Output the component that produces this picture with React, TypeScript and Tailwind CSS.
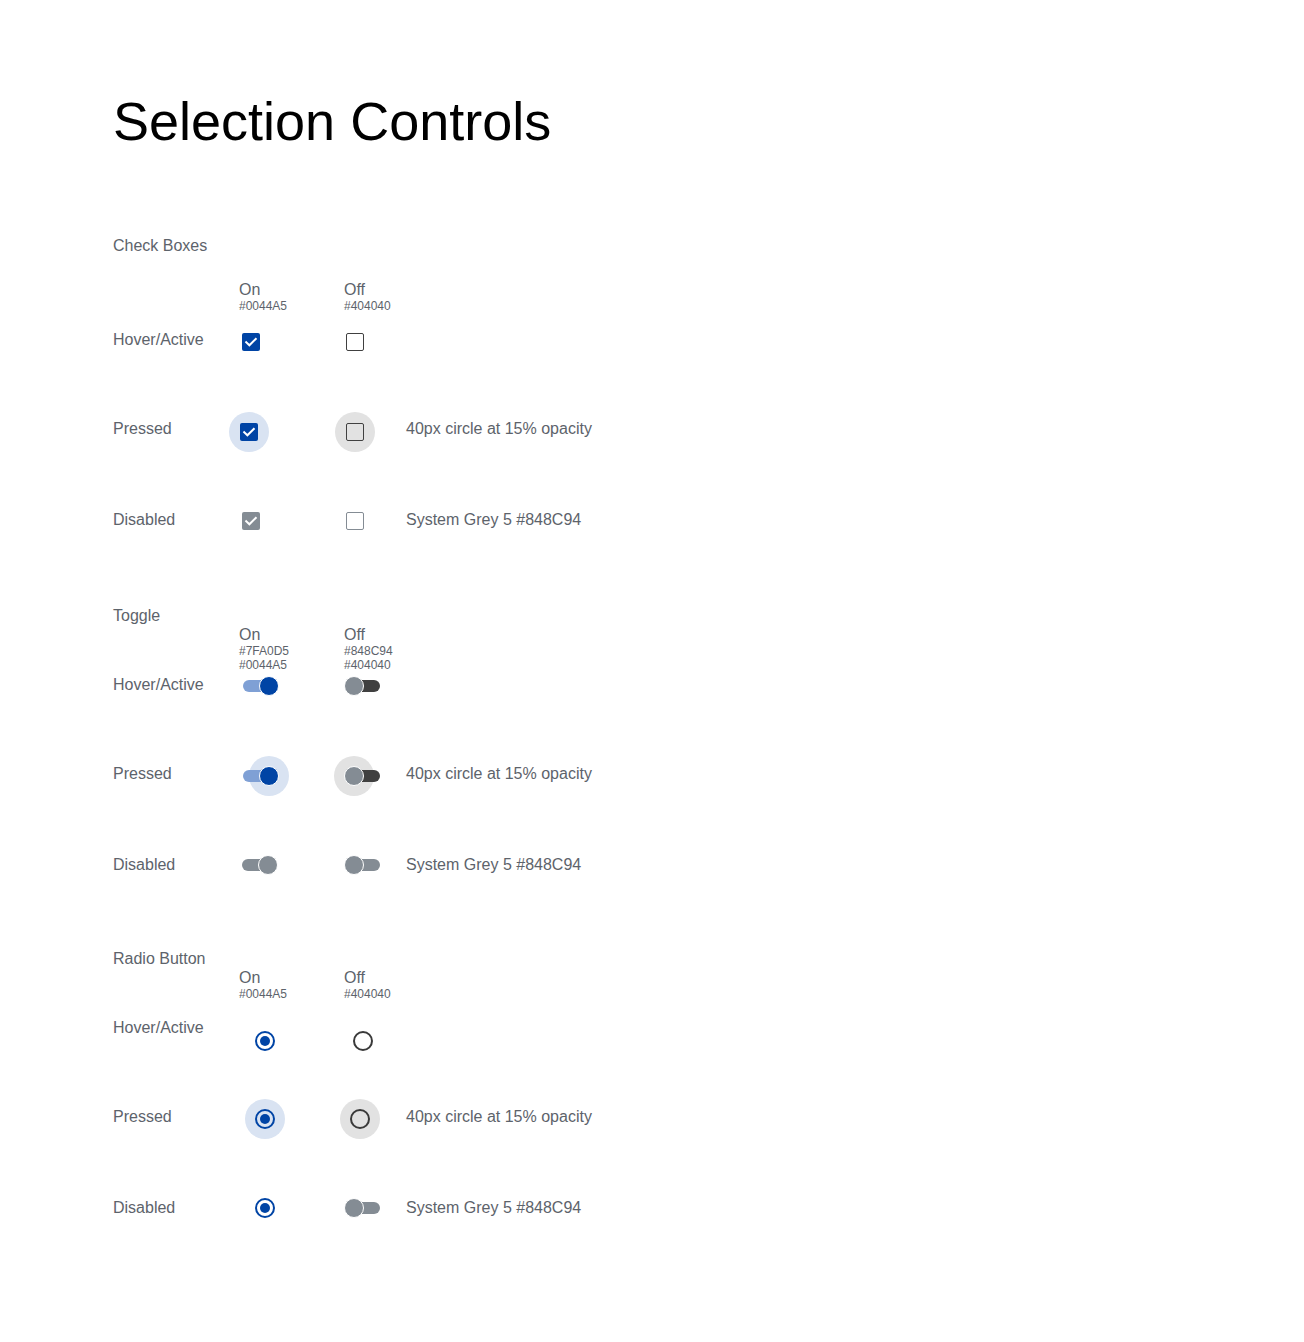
import React from "react";

const grid = "grid grid-cols-[118px_104px_71px_1fr] items-start";
const label = "pt-px text-base leading-6 text-[#5d636b]";

function Check({ color = "bg-[#0044A5]" }: { color?: string }) {
  return (
    <div className={`w-[18px] h-[18px] rounded-[2px] ${color} flex items-center justify-center`}>
      <svg width="18" height="18" viewBox="0 0 18 18" fill="none">
        <path d="M4.2 9.2 L7.4 12.3 L13.8 5.9" stroke="white" strokeWidth="2" strokeLinecap="square" />
      </svg>
    </div>
  );
}

function Box({ border = "border-[#404040]" }: { border?: string }) {
  return <div className={`w-[18px] h-[18px] rounded-[2px] border-[1.5px] ${border} bg-transparent`} />;
}

function Halo({ bg, children }: { bg: string; children: React.ReactNode }) {
  return <div className={`w-10 h-10 rounded-full ${bg} flex items-center justify-center`}>{children}</div>;
}

function Radio({ on }: { on?: boolean }) {
  return on ? (
    <div className="w-5 h-5 rounded-full border-2 border-[#0044A5] flex items-center justify-center">
      <div className="w-2.5 h-2.5 rounded-full bg-[#0044A5]" />
    </div>
  ) : (
    <div className="w-5 h-5 rounded-full border-2 border-[#3a3a3a]" />
  );
}

function Toggle({
  on,
  track,
  knob,
  halo,
}: {
  on?: boolean;
  track: string;
  knob: string;
  halo?: string;
}) {
  return (
    <div className="relative w-[37px] h-5">
      {halo && (
        <span
          className={`absolute top-1/2 -translate-y-1/2 w-10 h-10 rounded-full ${halo} ${on ? "right-[-10px]" : "left-[-10px]"}`}
        />
      )}
      <span className={`absolute left-px right-px top-1 h-3 rounded-full ${track}`} />
      <span className={`absolute top-0 w-5 h-5 rounded-full border border-white ${knob} ${on ? "right-0" : "left-0"}`} />
    </div>
  );
}

function Header({ lines }: { lines: [string, string[]][] }) {
  return (
    <div className={`${grid} h-[48px]`}>
      <div />
      <div className="ml-2 pt-px">
        <div className="text-base leading-[19px] text-[#5d636b]">{lines[0][0]}</div>
        {lines[0][1].map((h) => (
          <div key={h} className="text-xs leading-[14px] text-[#5d636b]">{h}</div>
        ))}
      </div>
      <div className="ml-[9px] pt-px">
        <div className="text-base leading-[19px] text-[#5d636b]">{lines[1][0]}</div>
        {lines[1][1].map((h) => (
          <div key={h} className="text-xs leading-[14px] text-[#5d636b]">{h}</div>
        ))}
      </div>
    </div>
  );
}

export default function App() {
  return (
    <div className="min-h-[1342px] bg-white pl-[113px] pt-[94px] font-['Liberation_Sans',Arial,sans-serif]">
      <h1 className="h-[139px] text-[54px] leading-none text-black">Selection Controls</h1>

      {/* Check boxes */}
      <div className={`${label} h-[46px]`}>Check Boxes</div>
      <Header lines={[["On", ["#0044A5"]], ["Off", ["#404040"]]]} />

      <div className={`${grid} h-[85px]`}>
        <div className={label}>Hover/Active</div>
        <div className="ml-[11px] mt-1.5"><Check /></div>
        <div className="ml-[11px] mt-1.5"><Box /></div>
      </div>

      <div className={`${grid} h-[95px]`}>
        <div className={`${label} mt-1`}>Pressed</div>
        <div className="-ml-0.5">
          <Halo bg="bg-[#d9e3f2]"><Check /></Halo>
        </div>
        <div>
          <Halo bg="bg-[#e2e2e2]"><Box /></Halo>
        </div>
        <div className={`${label} mt-1`}>40px circle at 15% opacity</div>
      </div>

      <div className={`${grid} h-[96px]`}>
        <div className={label}>Disabled</div>
        <div className="ml-[11px] mt-[5px]"><Check color="bg-[#848C94]" /></div>
        <div className="ml-[11px] mt-[5px]"><Box border="border-[#848C94]" /></div>
        <div className={label}>System Grey 5 #848C94</div>
      </div>

      {/* Toggle */}
      <div className={`${label} h-[21px]`}>Toggle</div>
      <Header lines={[["On", ["#7FA0D5", "#0044A5"]], ["Off", ["#848C94", "#404040"]]]} />

      <div className={`${grid} h-[89px]`}>
        <div className={label}>Hover/Active</div>
        <div className="ml-[11px] mt-1">
          <Toggle on track="bg-[#7FA0D5]" knob="bg-[#0044A5]" />
        </div>
        <div className="ml-[9px] mt-1">
          <Toggle track="bg-[#404040]" knob="bg-[#848C94]" />
        </div>
      </div>

      <div className={`${grid} h-[91px]`}>
        <div className={label}>Pressed</div>
        <div className="ml-[11px] mt-[5px]">
          <Toggle on track="bg-[#7FA0D5]" knob="bg-[#0044A5]" halo="bg-[#d9e3f2]" />
        </div>
        <div className="ml-[9px] mt-[5px]">
          <Toggle track="bg-[#404040]" knob="bg-[#848C94]" halo="bg-[#e2e2e2]" />
        </div>
        <div className={label}>40px circle at 15% opacity</div>
      </div>

      <div className={`${grid} h-[94px]`}>
        <div className={label}>Disabled</div>
        <div className="ml-[10px] mt-[3px]">
          <Toggle on track="bg-[#848C94]" knob="bg-[#848C94]" />
        </div>
        <div className="ml-[9px] mt-[3px]">
          <Toggle track="bg-[#848C94]" knob="bg-[#848C94]" />
        </div>
        <div className={label}>System Grey 5 #848C94</div>
      </div>

      {/* Radio */}
      <div className={`${label} h-[21px]`}>Radio Button</div>
      <Header lines={[["On", ["#0044A5"]], ["Off", ["#404040"]]]} />

      <div className={`${grid} h-[84px]`}>
        <div className={label}>Hover/Active</div>
        <div className="ml-6 mt-4"><Radio on /></div>
        <div className="ml-[18px] mt-4"><Radio /></div>
      </div>

      <div className={`${grid} h-[96px]`}>
        <div className={`${label} mt-[5px]`}>Pressed</div>
        <div className="ml-3.5">
          <Halo bg="bg-[#d9e3f2]"><Radio on /></Halo>
        </div>
        <div className="ml-[5px]">
          <Halo bg="bg-[#e2e2e2]"><Radio /></Halo>
        </div>
        <div className={`${label} mt-[5px]`}>40px circle at 15% opacity</div>
      </div>

      <div className={`${grid} h-[147px]`}>
        <div className={label}>Disabled</div>
        <div className="ml-6 mt-[3px]"><Radio on /></div>
        <div className="ml-[9px] mt-[3px]">
          <Toggle track="bg-[#848C94]" knob="bg-[#848C94]" />
        </div>
        <div className={label}>System Grey 5 #848C94</div>
      </div>
    </div>
  );
}
